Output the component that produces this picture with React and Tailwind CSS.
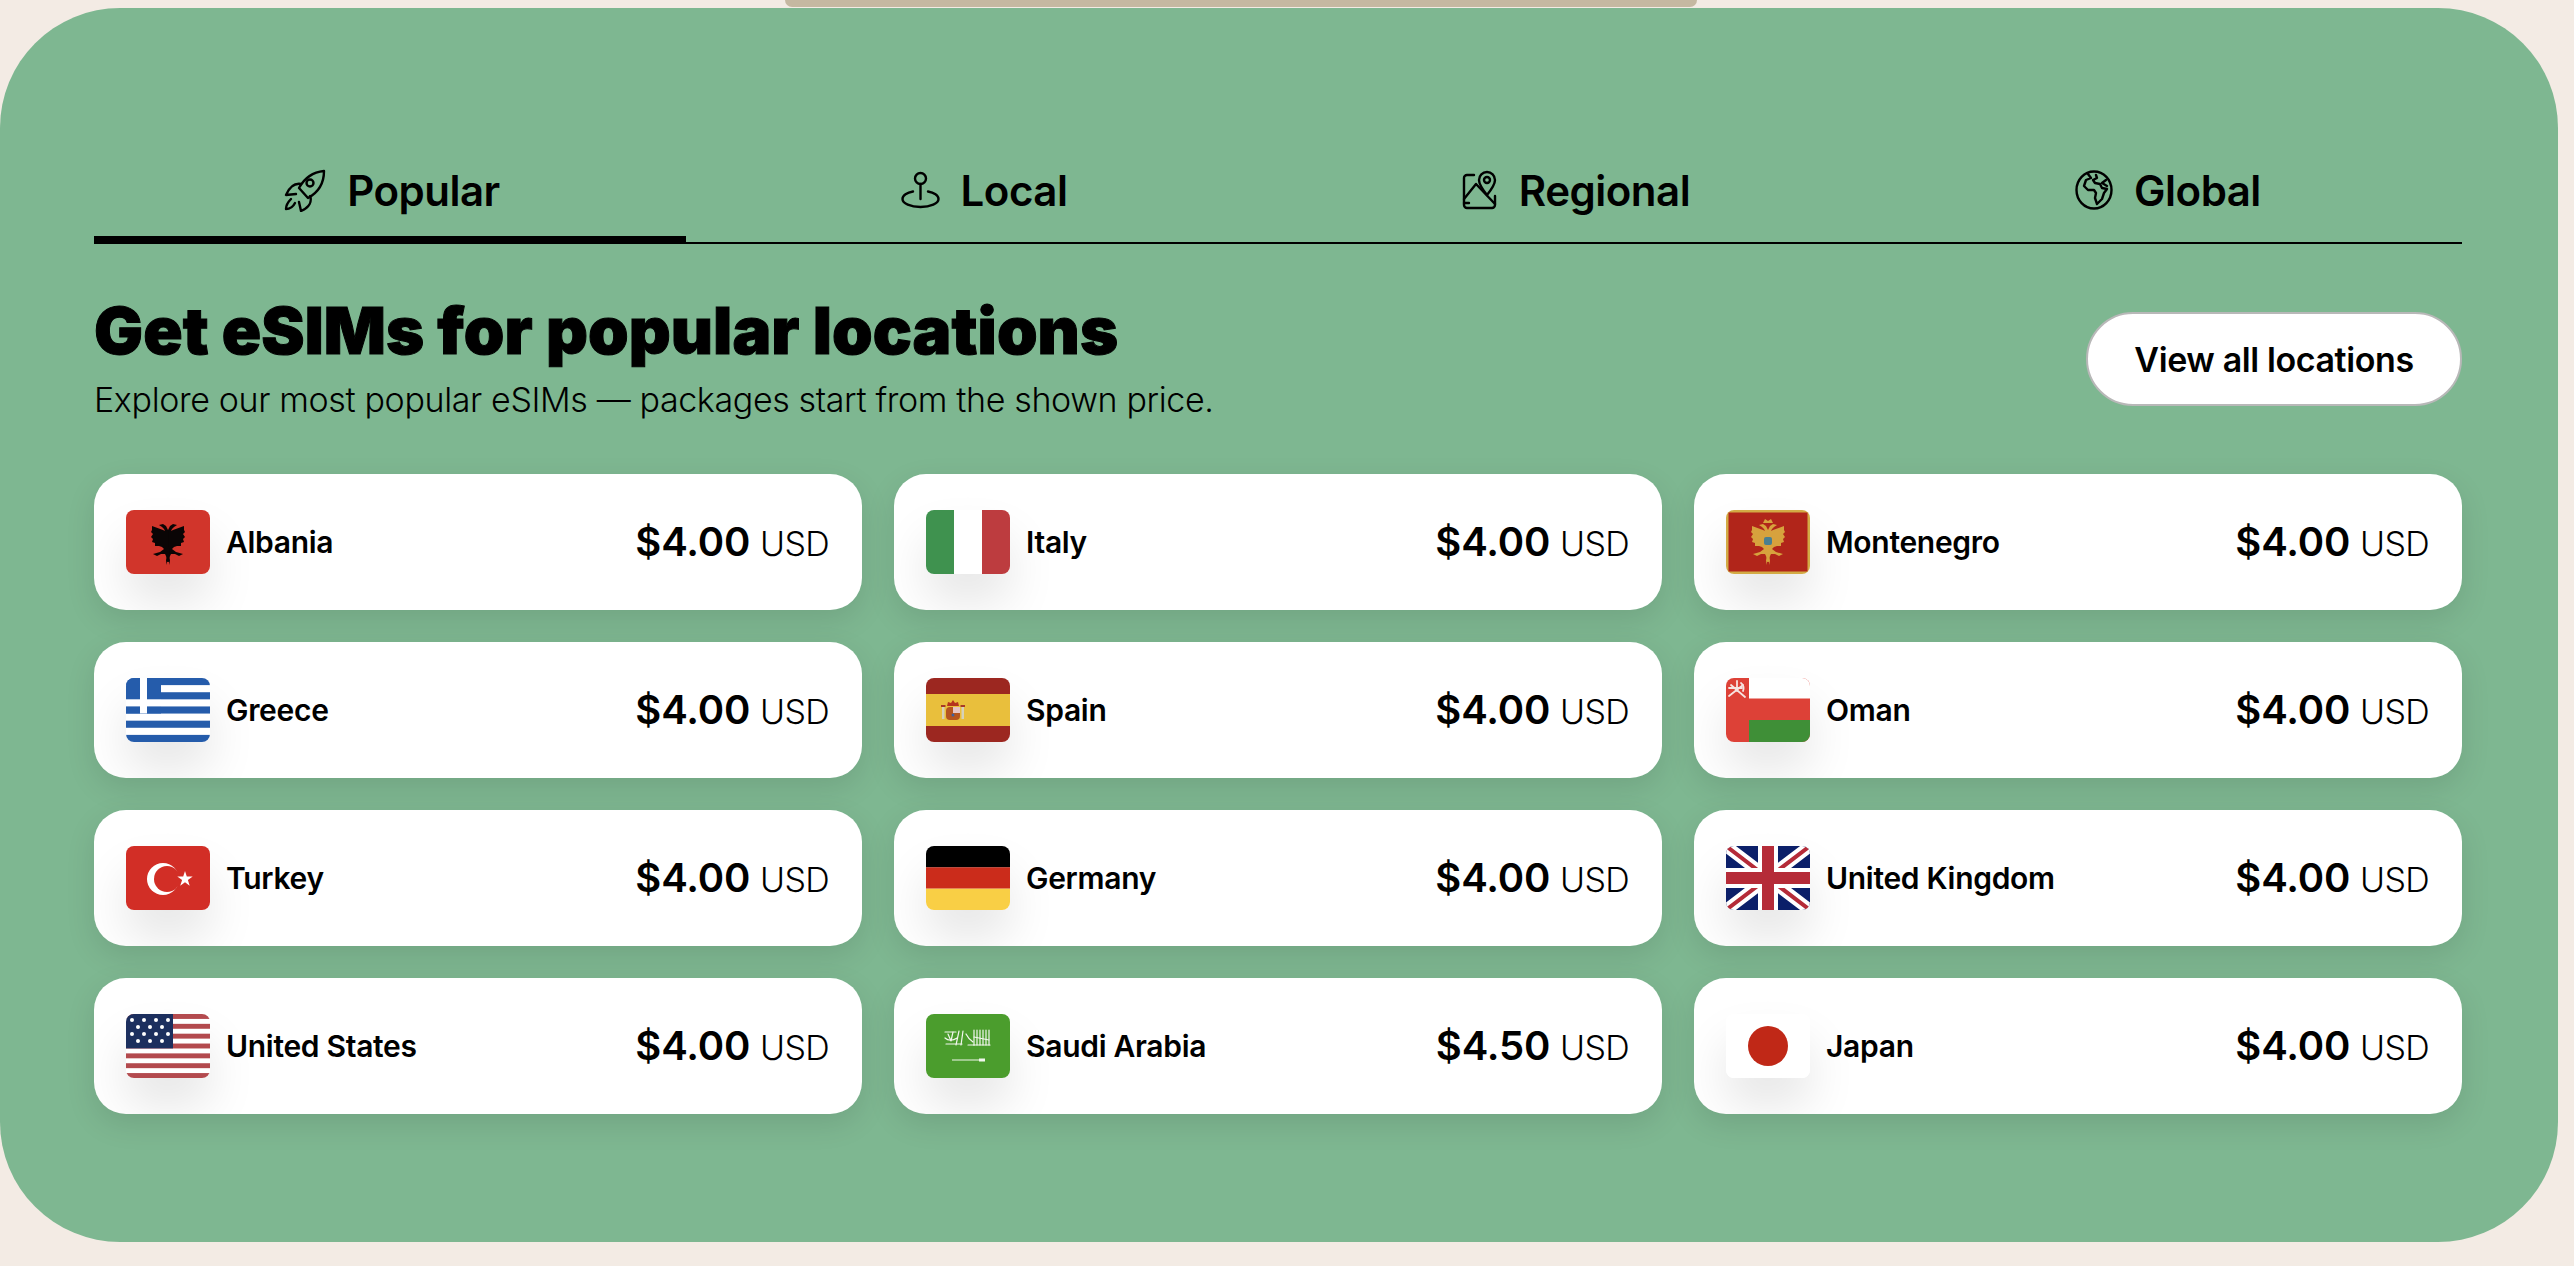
const RocketIcon = () => (
  <svg width="42" height="43" viewBox="0 0 42 43" fill="none" stroke="currentColor" strokeWidth="2.4" strokeLinejoin="round" strokeLinecap="round">
    <path d="M40 2c-10 1-19 6-25 17l9 10c11-6 16-15 16-27z" />
    <circle cx="26" cy="14" r="3.5" />
    <path d="M17 15C11 14 6 17 2 26l10-1" />
    <path d="M26 27c2 5 0 11-9 15l-2-9" />
    <path d="M7 30c-3 3-5 6-5 10 4 0 7-2 9-6" />
  </svg>
)

const LocalIcon = () => (
  <svg width="39" height="38" viewBox="0 0 39 38" fill="none" stroke="currentColor" strokeWidth="2.4" strokeLinecap="round">
    <circle cx="19.5" cy="7.5" r="5.5" />
    <path d="M19.5 13v15" />
    <path d="M12 20.5C6 21.5 1.5 24.5 1.5 28c0 4.500 8 8 18 8s18-3.500 18-8c0-3.500-4.500-6.500-10.500-7.500" />
  </svg>
)

const RegionalIcon = () => (
  <svg width="36" height="40" viewBox="0 0 36 40" fill="none" stroke="currentColor" strokeWidth="2.4" strokeLinejoin="round" strokeLinecap="round">
    <path d="M12 5H5a3 3 0 0 0-3 3v27a3 3 0 0 0 3 3h25a3 3 0 0 0 3-3V26" />
    <path d="M2 29l12-15 19 20" />
    <path d="M2 33h5" />
    <path d="M25 2a8 8 0 0 0-8 8c0 5 8 15 8 15s8-10 8-15a8 8 0 0 0-8-8z" />
    <circle cx="25" cy="10" r="3" />
  </svg>
)

const GlobalIcon = () => (
  <svg width="38" height="40" viewBox="0 0 38 40" fill="none" stroke="currentColor" strokeWidth="2.4" strokeLinejoin="round" strokeLinecap="round">
    <ellipse cx="19" cy="20" rx="17.500" ry="18.500" />
    <path d="M13 4l3 4-5 2-2 6 4 4h6l2 3-1 5 2 6 5-5 2-6 3-4-5-1-2-4-5-1-2-3 4-2-1-3" />
    <path d="M31 10l-4 3 5 3" />
  </svg>
)

const eagleHalf = 'M42 20l2-4 3-2 4 1-3 2-2 2-1 2 2-1 11-4v4l1 2-2 2 2 3-2 2 1 3-3 1v3l-4 0-3 1-2 2 4 3 7 2-4 2-4-2h-4l-2 4 1 3-3 1-1 3z'

const eagle = (
  <>
    <path d={eagleHalf} />
    <path d={eagleHalf} transform="matrix(-1 0 0 1 84 0)" />
  </>
)

const Stripes = ({ n, c }) => (
  <>
    {Array.from({ length: n }).map((_, i) =>
      i % 2 === 0 ? <rect key={i} x="0" y={(i * 64) / n} width="84" height={64 / n} fill={c} /> : null
    )}
  </>
)

const flags = {
  Albania: (
    <>
      <rect width="84" height="64" fill="#d1352b" />
      <g fill="#0a0505">{eagle}</g>
    </>
  ),
  Italy: (
    <>
      <rect width="28" height="64" fill="#3f924f" />
      <rect x="28" width="28" height="64" fill="#ffffff" />
      <rect x="56" width="28" height="64" fill="#bd3c3f" />
    </>
  ),
  Montenegro: (
    <>
      <rect width="84" height="64" fill="#d3ab45" />
      <rect x="2.500" y="2.500" width="79" height="59" fill="#b1251a" />
      <g fill="#d7a23d">{eagle}</g>
      <path d="M37 13l2-4 3 2 3-2 2 4z" fill="#d7a23d" />
      <rect x="38" y="27" width="8" height="8" rx="2" fill="#4b7f8f" />
    </>
  ),
  Greece: (
    <>
      <rect width="84" height="64" fill="#ffffff" />
      <Stripes n={9} c="#255cab" />
      <rect width="35" height="35.500" fill="#255cab" />
      <rect x="14" width="7" height="35.500" fill="#ffffff" />
      <rect y="21.300" width="35" height="7.100" fill="#ffffff" />
    </>
  ),
  Spain: (
    <>
      <rect width="84" height="64" fill="#9c2720" />
      <rect y="16" width="84" height="32" fill="#e9bf3c" />
      <rect x="20" y="29" width="14" height="13" rx="4" fill="#b5541f" />
      <rect x="27" y="29" width="7" height="6" fill="#e6c4c4" />
      <circle cx="27" cy="37" r="1.500" fill="#3f5f9f" />
      <path d="M21 28l1-4 3 1 2-3 2 3 3-1 1 4z" fill="#b5341f" />
      <rect x="16" y="29" width="2.500" height="12" fill="#d6d2ba" />
      <rect x="35.500" y="29" width="2.500" height="12" fill="#d6d2ba" />
      <rect x="15" y="27" width="4.500" height="2" fill="#a83a25" />
      <rect x="34.500" y="27" width="4.500" height="2" fill="#a83a25" />
    </>
  ),
  Oman: (
    <>
      <rect width="84" height="64" fill="#dd4137" />
      <rect x="23" width="61" height="20.500" fill="#ffffff" />
      <rect x="23" y="42" width="61" height="22" fill="#3f8f37" />
      <g stroke="#f6e3e0" strokeWidth="1.800" strokeLinecap="round" fill="none">
        <path d="M3 18L17 7" />
        <path d="M5 7l14 12" />
        <path d="M3 10h13" />
        <path d="M11 3v10" />
        <path d="M15 5c3 2 3 6 2 8" />
      </g>
    </>
  ),
  Turkey: (
    <>
      <rect width="84" height="64" fill="#d22e26" />
      <circle cx="37" cy="33" r="16" fill="#ffffff" />
      <circle cx="41" cy="33" r="13" fill="#d22e26" />
      <path d="M59 25l1.800 5.600h5.900l-4.800 3.500 1.800 5.600-4.700-3.500-4.800 3.500 1.900-5.600-4.800-3.500h5.900z" fill="#ffffff" />
    </>
  ),
  Germany: (
    <>
      <rect width="84" height="21.400" fill="#000000" />
      <rect y="21.300" width="84" height="21.400" fill="#cb2c1b" />
      <rect y="42.700" width="84" height="21.300" fill="#f9cf45" />
    </>
  ),
  'United Kingdom': (
    <>
      <rect width="84" height="64" fill="#0b1f69" />
      <path d="M0 0L84 64M84 0L0 64" stroke="#ffffff" strokeWidth="12" />
      <path d="M0 0L84 64M84 0L0 64" stroke="#b52b38" strokeWidth="4" />
      <rect x="32" width="20" height="64" fill="#ffffff" />
      <rect y="22" width="84" height="20" fill="#ffffff" />
      <rect x="36" width="12" height="64" fill="#b52b38" />
      <rect y="26" width="84" height="12" fill="#b52b38" />
    </>
  ),
  'United States': (
    <>
      <rect width="84" height="64" fill="#ffffff" />
      <Stripes n={13} c="#b34a4e" />
      <rect width="47" height="34.400" fill="#1c2f5e" />
      <g fill="#ffffff">
        {[6, 20].map((y) => [6, 18, 30, 42].map((x) => <circle key={`${x}-${y}`} cx={x} cy={y} r="2" />))}
        {[13, 27].map((y) => [12, 24, 36].map((x) => <circle key={`${x}-${y}`} cx={x} cy={y} r="2" />))}
      </g>
    </>
  ),
  'Saudi Arabia': (
    <>
      <rect width="84" height="64" fill="#4b9d2d" />
      <g stroke="#f2f7ee" strokeWidth="1.200" fill="none" strokeLinecap="round">
        <path d="M19 18h11M19 24c3 3 8 3 12 0M20 30h16M33 17l-3 14M37 17l-2 14M40 20c2 4 4 6 7 8M42 31h6" />
        <path d="M48 16v15M51 16v15M54 16v15M57 16v15M60 16v15M63 16v15" />
        <path d="M22 20l3 7M27 18l-2 9M48 31h16M48 23l15 3" />
      </g>
      <path d="M26 46h27" stroke="#f2f7ee" strokeWidth="1.200" />
      <rect x="53" y="44.500" width="6" height="3" fill="#f2f7ee" />
    </>
  ),
  Japan: (
    <>
      <rect width="84" height="64" fill="#ffffff" />
      <circle cx="42" cy="32" r="20" fill="#c02817" />
    </>
  ),
}

const tabs = [
  { label: 'Popular', icon: <RocketIcon />, active: true },
  { label: 'Local', icon: <LocalIcon /> },
  { label: 'Regional', icon: <RegionalIcon /> },
  { label: 'Global', icon: <GlobalIcon /> },
]

const locations = [
  ['Albania', '$4.00'],
  ['Italy', '$4.00'],
  ['Montenegro', '$4.00'],
  ['Greece', '$4.00'],
  ['Spain', '$4.00'],
  ['Oman', '$4.00'],
  ['Turkey', '$4.00'],
  ['Germany', '$4.00'],
  ['United Kingdom', '$4.00'],
  ['United States', '$4.00'],
  ['Saudi Arabia', '$4.50'],
  ['Japan', '$4.00'],
]

export default function App() {
  return (
    <div className="h-[1266px] w-full overflow-hidden bg-[#f3ebe4] font-['Inter',sans-serif] text-black">
      <div className="ml-[785px] h-[7px] w-[912px] rounded-b-[14px] bg-[#c5b8a1]" />
      <div className="mt-px h-[1234px] w-[2558px] rounded-[120px] bg-[#7eb791] pl-[94px] pr-[96px] pt-[128px]">
        <div className="grid grid-cols-4 border-b-2 border-black">
          {tabs.map((t) => (
            <div
              key={t.label}
              className={`-mb-[2px] flex h-[108px] items-center justify-center gap-[21px] border-b-8 pl-1 pt-2 ${t.active ? 'border-black' : 'border-transparent'}`}
            >
              {t.icon}
              <span className="text-[42px] font-semibold tracking-[-0.5px]">{t.label}</span>
            </div>
          ))}
        </div>

        <div className="mt-[51px] flex items-center justify-between">
          <div>
            <h1 className="text-[65px] font-black leading-[72px] tracking-[0.1px] [-webkit-text-stroke:1px_black]">Get eSIMs for popular locations</h1>
            <p className="mt-[11px] text-[34px] font-light leading-[44px] tracking-[-0.37px]">Explore our most popular eSIMs — packages start from the shown price.</p>
          </div>
          <button className="h-[94px] w-[376px] rounded-[47px] border-2 border-[#b8b8b8] bg-white pt-[2px] text-[34px] font-semibold tracking-[-0.4px]">
            View all locations
          </button>
        </div>

        <div className="mt-[52px] grid grid-cols-3 gap-8">
          {locations.map(([name, price]) => (
            <div
              key={name}
              className="flex h-[136px] items-center overflow-hidden rounded-[32px] bg-white pl-8 pr-[33px] shadow-[0_10px_30px_rgba(0,0,0,0.1)]"
            >
              <div className="h-16 w-[84px] shrink-0 overflow-hidden rounded-lg shadow-[0_28px_48px_rgba(0,0,0,0.1)]">
                <svg width="84" height="64" viewBox="0 0 84 64" className="block">{flags[name]}</svg>
              </div>
              <span className="ml-4 text-[30px] font-semibold tracking-[-0.3px]">{name}</span>
              <span className="ml-auto flex items-baseline gap-[10px]">
                <span className="text-[40px] font-semibold tracking-[-0.2px]">{price}</span>
                <span className="text-[34px] font-light tracking-[-0.02em]">USD</span>
              </span>
            </div>
          ))}
        </div>
      </div>
    </div>
  )
}
